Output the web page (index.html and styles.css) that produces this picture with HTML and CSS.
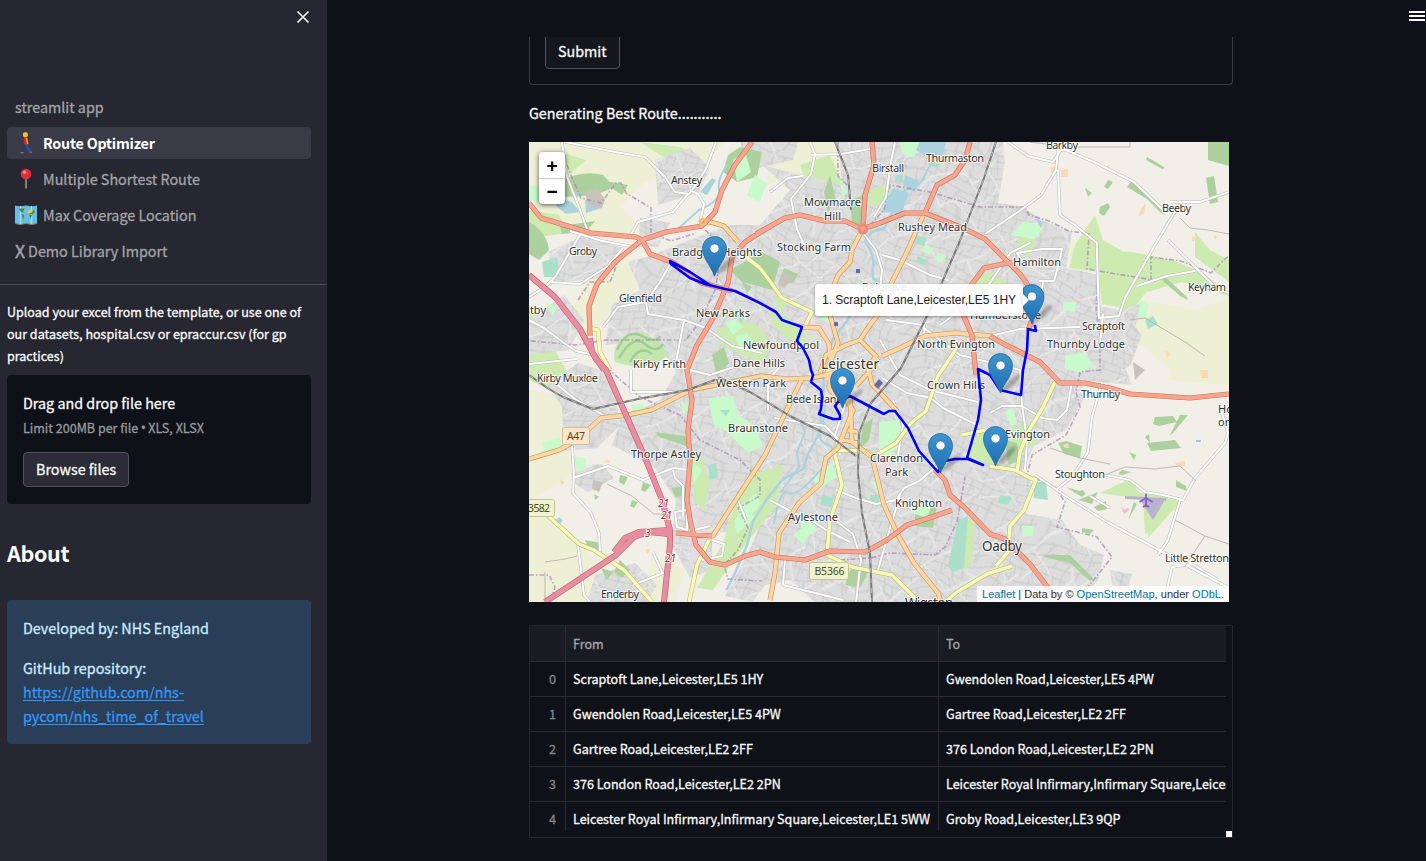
FILE: index.html
```html
<!DOCTYPE html>
<html lang="en">
<head>
<meta charset="utf-8">
<title>Route Optimizer</title>
<link rel="stylesheet" href="styles.css">
</head>
<body>
<div class="app">
<aside class="sidebar">
  <div class="close-row"><svg width="14" height="14" viewBox="0 0 14 14"><path d="M1.5 1.5l11 11M12.500 1.500l-11 11" stroke="#fafafa" stroke-width="1.7"/></svg></div>
  <nav class="nav">
    <a class="nav-item">streamlit app</a>
    <a class="nav-item active"><svg class="emoji" width="22" height="22" viewBox="0 0 22 22"><path d="M9.500 11l-.5 5-2 4" stroke="#29386b" stroke-width="2.600" fill="none"/><path d="M11 11l1.500 5 3 3.500" stroke="#344b8e" stroke-width="2.600" fill="none"/><path d="M8.500 6q2-1.500 4 0l1 6.500h-4.500z" fill="#d3262d"/><path d="M11.500 6l1.200 6" stroke="#f0a019" stroke-width="1.500"/><rect x="8" y=".3" width="4.800" height="5" rx="1.800" fill="#f4c22c"/><path d="M5.500 20.700h3M14.500 20.200h2.500" stroke="#9a8a80"/></svg>Route Optimizer</a>
    <a class="nav-item"><svg class="emoji" width="22" height="22" viewBox="0 0 22 22"><path d="M11 9v11.500" stroke="#9b8e86" stroke-width="1.700"/><circle cx="11" cy="6" r="5.300" fill="#dd2e3b"/><circle cx="9.500" cy="4.300" r="1.700" fill="#ff8d8d"/></svg>Multiple Shortest Route</a>
    <a class="nav-item"><svg class="emoji" width="22" height="22" viewBox="0 0 22 22"><path d="M0 1.500l5 1 6-1 6 1 5-1v18l-5 1-6-1-6 1-5-1z" fill="#61bfe9"/><path d="M5.500 2v18M16.500 2v18" stroke="#a9e0f7" stroke-width="1.500"/><path d="M3.500 4.500l6 0-1.500 4-2-.5zM6.500 10l3 1-1.500 5zM12 7l6-1.500 2 2.500-3 2.500-3-1zM14 10.500l3 .5-1.500 4z" fill="#5f8238"/><path d="M12 6.500l6-1-1 3-4 1z" fill="#e9cc4c"/><path d="M0 19.500l5 1 6-1 6 1 5-1" stroke="#a17d51" fill="none"/></svg>Max Coverage Location</a>
    <a class="nav-item"><span class="nav-x">X</span>Demo Library Import</a>
  </nav>
  <div class="side-body">
    <p class="upload-label">Upload your excel from the template, or use one of<br>our datasets, hospital.csv or epraccur.csv (for gp<br>practices)</p>
    <section class="dropzone">
      <div class="drop-title">Drag and drop file here</div>
      <div class="drop-hint">Limit 200MB per file <span class="bullet">•</span> XLS, XLSX</div>
      <button class="btn browse">Browse files</button>
    </section>
    <h2 class="about">About</h2>
    <div class="info">
      <p>Developed by: NHS England</p>
      <p>GitHub repository:<br><a href="#">https://github.com/nhs-<br>pycom/nhs_time_of_travel</a></p>
    </div>
  </div>
</aside>
<main class="main">
  <header class="topbar"><svg width="16" height="14" viewBox="0 0 16 14"><path d="M0 3h16M0 7h16M0 11h16" stroke="#fafafa" stroke-width="2"/></svg></header>
  <div class="column">
    <div class="form-end"><button class="btn submit">Submit</button></div>
    <p class="status">Generating Best Route...........</p>
    <div class="map">
<svg class="map-svg" width="700" height="460" viewBox="529 142 700 460">
<defs>
  <pattern id="st" width="46" height="42" patternUnits="userSpaceOnUse" patternTransform="rotate(17)">
    <path d="M0 5h46M0 14h27M27 19h19M0 26h46M8 34h38M5 0v14M14 5v21M23 26v16M27 0v26M36 5v14M40 19v23M8 26v16M18 14v5M31 34v8" fill="none" stroke="#c3c3c3" stroke-width=".8"/>
  </pattern>
  <pattern id="st2" width="90" height="84" patternUnits="userSpaceOnUse" patternTransform="rotate(-28)">
    <path d="M0 12h50M12 12v32h60M50 0v44M72 20v64M30 44v40M0 66h30M72 60h18M50 20h40" fill="none" stroke="#ececec" stroke-width="1.300"/>
  </pattern>
  <filter id="wob" x="0" y="0" width="100%" height="100%"><feTurbulence type="fractalNoise" baseFrequency=".022" numOctaves="1" seed="4"/><feDisplacementMap in="SourceGraphic" scale="36" xChannelSelector="R" yChannelSelector="G"/></filter>
  <clipPath id="urban">
    <path d="M838 142H1003L1005 162 998 203 1020 206 1046 222 1072 232 1066 268 1098 275V306L1120 310 1142 335 1130 366 1106 378 1080 372 1084 398 1066 430 1034 446 1022 472 1034 486 1026 514 1062 520 1080 545 1104 555 1098 580 1080 602H815L790 580 765 585 752 602 725 596 752 545 762 520 740 535 722 532 712 540V570L690 578 672 545 676 500 655 468 612 445 622 418 660 400 676 372 655 340 605 345 612 305 640 290 628 262 650 256 690 240 730 225 760 225 790 190 762 165 800 175 842 185Z"/>
    <path d="M655 160l35-12 20 20-12 25-40 12zM548 252l35-16 40 12-20 30-50 5zM529 320l35-25 20 25-15 30-40 5zM548 385l30-22 32 10 8 38-50 5zM562 400l35-10 28 30-28 28-34 3zM574 466l28-2 12 14-26 14-16-10zM595 575l40-12 22 22-10 17h-60zM640 218l30 5-12 24h-20zM1064 348l52-5 16 42-50-5zM1108 316l38-15-12 28zM740 142h58l-5 18-45 10zM1110 570l22 4-6 20-14-10z"/>
  </clipPath>
  <linearGradient id="mk" x1="0" y1="0" x2="0" y2="1"><stop offset="0" stop-color="#3e94d1"/><stop offset="1" stop-color="#1f6eb0"/></linearGradient>
  <filter id="blur"><feGaussianBlur stdDeviation="1.600"/></filter>
  <g id="pin">
    <path d="M0 0L5-9Q14-19 21-20Q17-8 0 0" fill="#000" opacity=".26" filter="url(#blur)"/>
    <path d="M0-.5C-1.500-5-5-10.500-8-15.500-10.500-20-12-24-12-28A12 12 0 0 1 12-28C12-24 10.500-20 8-15.500 5-10.500 1.500-5 0-.5Z" fill="url(#mk)" stroke="#2d6f9f" stroke-width=".9"/>
    <circle cy="-28" r="4.600" fill="#fff" stroke="#2b70a4" stroke-width=".8"/>
  </g>
</defs>
<rect x="529" y="142" width="700" height="460" fill="#f2efe9"/>
<!-- farmland and heath -->
<g fill="#eef0d5">
  <path d="M560 142h165l-20 22-60 18-25 25 35 35-60-8-60-25-6-67zM590 270l35-15 30 20-40 30-30 40-20-20zM529 390l40 8-8 45 15 30-47 28zM1070 240l28 20-10 15-18-8zM1135 298l60 12 34-12v80l-60-10-50-40zM529 505l50 40 60 50-20 7h-90zM770 142h70l-4 45-45-15-25 15zM1180 340h49v45l-60-5zM655 555l30 15-10 32h-40z"/>
</g>
<!-- grassland -->
<g fill="#cdebb0">
  <path d="M529 210l30 5 10 18-40 5zM800 165l30-10 22 50-10 20-30-25zM1075 245l20-30 8 25 18 10-4 24-48-6zM1097 250l35 2 40 8 30 12 30 25-50-15-35 10-25 20-20-28zM1195 232l15 18 19 10v22l-34-25zM1099 275l40-5 15 12-22 28-30-6zM1100 493l30-14 10 14 35 4-22 35-8 2-2-35zM1150 500l34-2-36 40zM529 305l40 70-20 15-20-10zM640 142l40 5 20 10-15 14zM560 152l26 8-22 20-15-18zM590 265l20-5-10 20z"/>
</g>
<!-- built-up districts with minor streets -->
<g clip-path="url(#urban)">
  <rect x="529" y="142" width="700" height="460" fill="#dddddd"/>
  <g filter="url(#wob)"><rect x="500" y="110" width="760" height="520" fill="url(#st)"/><rect x="500" y="110" width="760" height="520" fill="url(#st2)"/></g>
</g>
<!-- green space inside the city -->
<g fill="#cdebb0">
  <path d="M716 330l26-10 16 6 16 18-12 18-22-8-20-10zM735 505l22-32 26-8-6 40-40 50-24 35-16-2 26-45zM955 560l10-38 10-4-3 45-8 8zM690 450l10 4 10 28-6 30-10-12zM1010 430l20-8 8 20-25 15zM1020 235l18-5-8 28-14-8zM968 283l22-12 20 14-22 20-24 4zM977 434l20-2 4 32-34-2zM770 308l16 8 16 14 22 10-10 8-28-10-14-14zM775 295l14 8-10 10zM738 440l6 0-6-10zM870 190l16-6 8 8-14 14-12-2zM726 312l12-4 10 6-10 6z"/>
</g>
<!-- industry -->
<path d="M800 310l30-15 15 20-20 40-18-10zM770 345l20 5 12 30-12 15-20-30zM880 445l20 15-20 20zM690 500l20 20-8 45-15-5z" fill="#ebdbe8" opacity=".5"/>
<!-- woods -->
<g fill="#add19e">
  <path d="M563 180q20-10 40-5l12 12-20 8-30 2zM730 270l32-18 18 10-8 28-30-8zM529 222q18 10 20 28l-10 10-10-6zM850 200l14-5v32l-12-5zM1208 142h21v24l-21-6zM1206 178l8-2 4 26-8 2zM1100 207l8-4 2 4-6 9-5-3zM1085 188l7 5-4 4zM1108 180l5 2-5 7-4-2zM1147 157l12 7 6 4-3 1-16-9zM1131 181l20 16 14 18-4-2-14-14-20-12zM1164 276l22 20 2 4-8-4-18-16zM1155 417l18-1 4 6-18 4-6-2zM1147 443l28-3 6 8-30 3zM1129 452l7 3-2 5zM1150 443l-5-6 4-3zM1176 480l10 6 1 5-11-4zM1122 470l10 2-10 3-4-1zM1094 507l12-6 1 8-9 2zM1082 528l12 2-4 4-8-2zM1180 415l8 0-15 18-3 2zM620 475l8 2-4 8-5-3zM643 482l8 3-6 7-4-2zM632 500l6 2-4 6-4-2zM594 494l5 3-4 3zM620 560l10 10-8 8-8-6zM601 568l12 4-6 8zM585 540l16 3-3 10-10-5zM863 425l10-7-4 22-10 10zM850 570l20-2-10 20-15-3zM915 510l22-4-4 22-18-2zM671 488l14-2 3 8-12 4zM655 432l30 4 8 14-12-6-22-7zM1058 443l8-2 16 5-2 12-16-4zM1044 555l26 0 24 24-4 2-20-18-26-6zM1005 440l12 3 3 18-12 4zM830 175l6 25-8 12-4-20zM1078 500l20-8-6 12zM1066 487l20 6-4 4zM1073 493l10-3 2 4zM1128 520l6-18 3 2zM600 180l28 5-6 10zM712 355l12-8 5 16-12 14zM742 282l10 5-5 6zM728 155l12-8 22 5-5 25-20 5-14-10zM560 226l35-5-8 10-25 3zM784 268l14 6-4 8-16 4z"/>
</g>
<path d="M615 362q-4-16 10-26l18-4 16 10 10 12-10 8-20 6z" fill="#c6e6b0"/>
<g fill="none" stroke="#9dcf94" stroke-width="2.500"><path d="M617 350q10-22 25-14t18 0M619 358q14-24 26-14t18 0M630 362q10-18 22-8"/></g>
<!-- parks, pitches -->
<g fill="#c8facc">
  <path d="M708 398l25-2 4 18 18 12 8 20-15 7-22-22-12-5zM733 160l12-8 6 20-14 10zM755 175l12 8-8 20-12-8zM879 422l20-2 4 16-14 24-10-10zM1010 235l14-14 20 6-10 12zM1063 302l14 0-2 10-12-1zM1065 355l20-2 8 12-10 8-18-4zM1022 526l12 0-1 10-10 1zM848 287l12-5 30 20-8 14-28-14zM820 300l24 8-14 16-12-6zM925 245l8 4-4 6-8-4zM938 252l8 4-4 6-7-3zM1140 300l8 4-2 15-8-2zM1005 412l8-5 4 16-6 4zM530 185l20 5-6 14-16-4zM542 442l18-5 2 12-18 4zM545 302l12 6-5 8zM793 535l10-8 8 5-8 12zM800 522l14-4 2 12-12 6zM812 478l20-15 5 14-18 12zM910 505l12-5 10 4-5 14-16-5zM870 480l12 6-4 8zM742 505l14-12 5 10-15 18-12 8zM900 142l20 0-6 16-12-4zM680 400l12 8-8 6zM735 520l12-14 8 12-18 16zM630 405l12-2 5 8-10 6zM692 462l10 8-8 14zM570 455l16 4-1 12-12-2zM840 180l8 12-6 6zM725 322l10-3 8 8-10 8zM735 336l12-3 8 12-14 6z"/>
</g>
<g fill="#aae0cb">
  <path d="M1034 482l12 0 2 18-14-2zM958 520l10-4-4 52-12 4-4-6zM542 262l15-5 3 20-16 0zM915 235l12 3-3 8-12-4zM918 256l10 5-3 5-9-4zM930 160l12 2-4 6-8-2zM895 175l8 0v6h-8zM708 465l8-2 2 14-8 3zM870 495l8 0 2 8-10 0zM822 495l12 2-2 10-12-2zM1000 495l12 2-4 8-10-2zM736 315l8 2-3 6zM1145 320l8-4 5 8-10 5zM720 410l10 0-4 6z"/>
</g>
<!-- water -->
<g fill="#aad3df"><path d="M560 198l12 4 8 10-14 2-10-8zM585 200l15 0 2 8-16 5zM572 190l8 4-6 7zM920 142l26 0-4 18-14-2-12-8zM905 175l14 6-4 12-12-8zM893 188l16 5-8 22-18-4 5-14zM1035 218l8 4-2 6zM898 160l10 6-5 6zM700 192l12-14 4 2-9 15zM559 517l4 3-4 5-4-4z"/></g>
<g fill="#c7c2ba"><path d="M585 192l12-4 8 12-3 8-14-2zM782 272l12 4-10 12-6-4zM593 480l10 2-4 10-7-3zM1133 362l12 8-10 10z"/></g>
<g fill="none" stroke="#aad3df" stroke-linecap="round">
  <path stroke-width="2.500" d="M905 190q-6 14-12 22t-8 16l-14 4-6 10q10 12 8 25t4 14q-6 16-18 18l-12 22-12 15-6 10-8 20 3 16-3 30-1 20-12 22-5 15-20 10-16 20-14 22-6 24-12 28-8 16"/>
  <path stroke-width="2" d="M945 150q-15 12-20 25t-20 15M727 165q-10 14-8 25t-20 20l-20 18M822 390q6 18 0 35t6 20-10 28-30 20-14 30M801 422l4 10-8 20 2 15-18 25"/>
</g>
<!-- orchards and villages -->
<g fill="#fad9b4"><path d="M1050 168l8-3 2 8-9 0zM1061 170l7-1 0 8-7 0zM1142 207l4-4-2 10-6 4zM1192 238l4-3 1 5-5 1zM1063 445l5-2 1 5-4 0zM1175 463l10-2 0 5-9 0zM1086 226l4 2-4 3zM1214 236l4 0-3 4zM1106 167l3-2 1 3zM560 480l5 2-4 3zM645 550l6-2-3 6zM1165 350l6 3-4 5zM1200 370l8 0 0 8-7 0zM603 462l5-3 2 4z"/></g>
<!-- administrative boundaries -->
<g fill="none" stroke="#a98bb4" stroke-width="1.600" stroke-dasharray="5 2 1.500 2" opacity=".75">
  <path d="M563 155l10 25 8 18 20 5 15-20 5 0 5 10 25 15 0 25 20 8 25-8M578 300l12-18 20 0 12-30M705 230q20 15 10 60l-14 30-15 20-80 0-30 5-55-5M838 142v34l10 10M870 225l14-15 6-25 22 4 18 3 50 15 15 0h30l4 8 20 6 20 10 20 3-2 35 60 10 4 2 0-24 30 4 30 12 15-15 18-12M1098 275l-2 35 4 25v35l-20 2-4 20 4 15-14 28-34 20-5 20 28 12 10 15-8 25 40 10 15 20-24 30M600 360l15 15 25 22 40 18 20 25 40 20 20 20 0 16-22 12 10 20-10 22-14 15 4 14 34 2M840 560l30-2 20-5 45 2 10-8 12-25 8-45M529 575l20 0 6 12-5 15"/>
</g>
<!-- unclassified roads: casing then fill -->
<g class="road" stroke="#bcbcb8" stroke-width="3.200"><path id="wroads" d="M565 142l50 10 30 5 20 20 10 15 14 2 5-7 12-18 10-27M690 190l8 4 6 10-4 18M688 194l-15 18-35 10-8 14M562 142l5 35 12 30 8 22M570 231l32 10 32 6M580 235l-25 42-10 10-16 10M550 282l30 2 28-18 15-18M670 264l-10 18-14 20-28 5-15 20M646 302l2 12 36 6 22 8 26 18 30 7M684 320l-8 42M529 320l15 8 20 15 12 8 22 5 8 12M529 364l48-5M770 192l18-14 15-2M810 142l5 12-4 20-20 25 6 30 8 18M811 155l30-1 29-5M895 142l-4 20-5 35-12 20M861 230l15 20 6 20-2 20M882 255l18 5 30 15 18 5M1008 142l20 14 25 6 8-12 5 0 28 12 40 20 28 27M1058 150l-2 20-15 25-20 15-18 12-18 12M1058 170l2 45 15 10 22 18 0 10 2 65 20-2 6-18 10-18 20-35 18-30 10-14M1170 202l30 0 29-10M1168 240l28 28 20 20 13 5M1137 286l30-10 28-5M990 336l30-7 60-2M1025 265l-8-12 25-4 20 0-2 10-6 22-15 0M1043 282l-3 20M1100 344l3-30M1102 382l-10 35-4 35-16 25-15 12M990 413l12-7 20 0 20 12 15 2 10-10 5-28M1020 370l2 35 5 35-2 30M1035 475l32 22 40 25 52 28 40 22 30 16M1105 475l25 5 15 12 18 3 20 5 12-22 30-35 3-10-6-20M1180 500l-12 40-10 15M1164 602l8-35 20-3 25 15M572 445l2 30-1 18 18 20 8 20 1 20M573 478l35-12 35 14 10-4 20-8 16 2M673 470l2 8 8 8v30M578 545l6 50 6 7M633 585l38-15M653 552l10 22M545 375l30 24 28 16M694 530l16-4M712 540l12 4-2 12-20 4M675 512l12-2v20l-10-3zM631 370v22l50 0M690 385l0-15 20 5 30-10M770 500l22 12 22 10 12 8 24 12M836 490l20 8 20 6 20-4 8-12 15-7 18-15M882 378l25 15 24 5 12 10 20 10 16 8M900 495l-12 40-10 35M880 340l20 35 30 15 48 12M850 390l-15 45 5 20M920 325l40 30 60 15M785 560l-2 25 60 15M940 325l30-22 20-20 20-30 20-10M886 320l38 5 1 20M775 418l50 8 15 15M1110 508l-20-12M768 410l0-30 18-20M746 520l-10-25M835 520l18 14 8 25-5 43M893 400l10 25-5 30"/></g>
<use class="road" href="#wroads" stroke="#fff" stroke-width="2"/>
<path d="M607 484l25 12 22 18 10 0M545 562l20-3 12-3M545 602v-30M1105 475l20-8 30 2 25-3 16 15M1175 520l30 16 24 8M1130 320l15-2 20 12 20 12 20 14M1180 218l10 10 18 2 21 4M1030 142l40 5 60 0 0-5M1050 448l30 10 30 6M1205 536l-20 30" fill="none" stroke="#bdb9b3"/>
<!-- secondary roads -->
<g class="road" stroke="#b8bb6b" stroke-width="4.600"><path id="yroads" d="M544 512l35 32 15 6 30 20 28 32M709 540l-12 25-8 37M588 328l10 2 2 22 10 18M760 268l12 16 10 14 30 14-8 16M746 257l14 11M835 450l30 1 10 5M834 450l8 35-12 35-3 35 25 12 40 8 25 25 18 10M945 602l12-10 30-18 25-8M876 455l20-12 15-20 15-12 12-35 20-30M990 466l25 4 15 8 6 2-12 30-14 16-2 26-12 14M1055 382l-12 25-15 25-8 20-3 20M962 435l24-5"/></g>
<use class="road" href="#yroads" stroke="#f6f9ba" stroke-width="3.500"/>
<!-- primary roads -->
<g class="road" stroke="#c59651" stroke-width="5"><path id="oroads" d="M529 459l30-9 18-10 24-22 26-3 24-5 40-20 30-6 40-8 25 3 26-1 18-4M862 230l-10 20-2 12-12 13-8 20 0 20 8 28-10 25-2 12M923 216l-18 40-15 30-2 15-18 24-10 15-14 5-20 10-6 18M802 327l17 1 10 16 2 24M882 356l18-8 25-12 30-3 36 3M712 537l18-28 35-54 28-58 10-20M843 395l10 15-15 38-12 10-5 25-22 20-20 30-4 40-5 27M850 396l2 46 20 15 12 48 14 30 16 28 24 30 3 9M831 370l-2 18 12 15M860 340l16 16-8 12 4 16 25 27M856 386l18-20 4-8M702 222l8 0 14 4 14 16M843 440l15 3M848 430l9 2"/></g>
<use class="road" href="#oroads" stroke="#fcd6a4" stroke-width="3.800"/>
<!-- trunk roads -->
<g class="road" stroke="#cf6f56" stroke-width="5.200"><path id="troads" d="M529 203l12 15 50 15 45 4 6 3 24-8 36-6 13-14 7-22 13-25 17-23M642 240l8 14 22 8 30 21 30 8M642 240l-27 22-18 22-8 22 1 30M769 227l-24 15-13 15-4 26-16 37-15 25-10 25 5 30-4 30 2 30-3 40 3 20 6 25 14 17 15 3 20-9 15-4 15 5 30 3 25-9 35 1 22-12 20-15 25-8 20-7M935 470l10 10 5 15 15 13 25 26 15 5 25 25 25 33M676 533l36 3M756 234l29-16 15-3 25 6h20l17 8 18-6 25-10h20l40 16 20 10 15 15 20 20 14 20M970 142l-5 18-10 15-18 10-12 28M872 142l2 23-9 30-2 33M1012 262l-28 6-12 16-13 21 13 30 4 40M990 336l14 8 36 18 20 21h25l25 5 20 6 60 4 39-4M1032 320l-4 10"/></g>
<use class="road" href="#troads" stroke="#f6a58f" stroke-width="4"/>
<circle cx="863" cy="229" r="4" fill="none" stroke="#e58d79" stroke-width="3"/>
<circle cx="703" cy="222" r="3" fill="none" stroke="#efbd77" stroke-width="2"/>
<!-- motorways -->
<g class="road" stroke="#c9566f" stroke-width="6"><path id="mway" d="M529 275l26 22 25 32 16 30 10 11 20 45 20 45 16 40 8 30v15l-6 57M669 534l-20-2-15 5-18 18-71 47M669 530l-30 2-14 6-11 14M590 338l2 14 12 18"/></g>
<use class="road" href="#mway" stroke="#e68fa0" stroke-width="4.800"/>
<!-- railways -->
<g class="road" stroke="#777" stroke-width="2"><path id="rail" d="M996 142l-12 36-25 65-28 65-30 60-30 35-12 30-1 40 4 40 8 40 2 49M529 375l20 14 14 8 30 12 45-10 50-9 32-12 30 14 40 24 40 20 26 20M835 142l13 33 3 35"/></g>
<use class="road" href="#rail" stroke="#c4c4c4" stroke-width=".8" stroke-dasharray="5 5"/>
<!-- airfield -->
<path d="M1125 496l41 2 0 3-41-2zM1140 500h25l-12 20z" fill="#bab3cf"/>
<path d="M1146 494v13M1139.500 502l6.500-4 6.500 4M1143 507l3-2 3 2" stroke="#8461c4" stroke-width="1.800" fill="none"/>
<path d="M1121 507l4 3 3-3 1 3-5 4z" fill="#ffb6c8"/><path d="M1196 441h5" stroke="#4a9fe0"/>
<g fill="#6868a5"><path d="M856 269h4v4h-4zM834 322h4v4h-4zM874 385l5-6 4 4-5 6z"/></g>
<!-- place names -->
<g class="lbl">
<text x="671" y="184" textLength="31">Anstey</text><text x="1046" y="149" textLength="32">Barkby</text><text x="872" y="172" textLength="32">Birstall</text><text x="926" y="162" textLength="58">Thurmaston</text><text x="804" y="206" textLength="57">Mowmacre</text><text x="824" y="220" textLength="17">Hill</text><text x="898" y="231" textLength="69">Rushey Mead</text><text x="1162" y="212" textLength="29">Beeby</text><text x="777" y="251" textLength="74">Stocking Farm</text><text x="569" y="255" textLength="28">Groby</text><text x="672" y="256" textLength="90">Bradgate Heights</text><text x="1013" y="266" textLength="48">Hamilton</text><text x="619" y="302" textLength="43">Glenfield</text><text x="696" y="317" textLength="54">New Parks</text><text x="862" y="291" textLength="45">Belgrave</text><text x="970" y="319" textLength="71">Humberstone</text><text x="1188" y="291" textLength="38">Keyham</text><text x="1082" y="330" textLength="43">Scraptoft</text><text x="1047" y="348" textLength="78">Thurnby Lodge</text><text x="917" y="348" textLength="78">North Evington</text><text x="743" y="349" textLength="76">Newfoundpool</text><text x="733" y="367" textLength="52">Dane Hills</text><text x="633" y="368" textLength="53">Kirby Frith</text><text x="517" y="314" textLength="29">Ratby</text><text x="537" y="382" textLength="61">Kirby Muxloe</text><text x="716" y="387" textLength="70">Western Park</text><text x="927" y="389" textLength="58">Crown Hills</text><text x="786" y="403" textLength="57">Bede Island</text><text x="728" y="432" textLength="60">Braunstone</text><text x="1081" y="398" textLength="39">Thurnby</text><text x="1005" y="438" textLength="45">Evington</text><text x="631" y="458" textLength="70">Thorpe Astley</text><text x="870" y="462" textLength="53">Clarendon</text><text x="885" y="476" textLength="23">Park</text><text x="1055" y="478" textLength="50">Stoughton</text><text x="895" y="507" textLength="47">Knighton</text><text x="788" y="521" textLength="50">Aylestone</text><text x="1165" y="562" textLength="64">Little Stretton</text><text x="601" y="598" textLength="38">Enderby</text><text x="1218" y="413">Houghton</text><text x="1218" y="426">on</text>
<g class="big"><text x="821" y="369" textLength="58">Leicester</text><text x="982" y="551" textLength="40">Oadby</text><text x="905" y="608" textLength="48">Wigston</text></g>
</g>
<g class="shield"><rect x="562.500" y="427.500" width="27" height="17" rx="2" fill="#f8e5cd" stroke="#d9bd95"/><text x="567" y="439.500" textLength="18" fill="#69420f">A47</text><rect x="515.500" y="499.500" width="39" height="17" rx="2" fill="#f1f2cf" stroke="#c4c692"/><text x="522" y="512" textLength="28" fill="#4a4e1c">B3582</text><rect x="809.500" y="562.500" width="39" height="17" rx="2" fill="#f1f2cf" stroke="#c4c692"/><text x="814.500" y="575" textLength="30" fill="#4a4e1c">B5366</text></g>
<g class="junction"><text x="658" y="507">21</text><text x="661" y="518.500">21</text><text x="665" y="562">21</text><text x="645" y="537">3</text></g>
<!-- computed route -->
<path class="route" d="M710 285L690 272 670 261 671 264 690 278 705 284 725 289 735 291 760 303 776 312 782 320 802 327 797 341 803 348 809 360 811 370 813 375 811 382 821 390 822 397 821 409 819 414 833 419 840 419 840 415 835 406 838 402 850 396 884 414 889 411 895 411 908 428 919 451 938 472 945 461 955 459 968 459 983 465 967 458 978 420 981 400 978 369 990 375 1000 390 1021 395 1023 370 1027 350 1028 329 1036 331 1035 326"/>
<use href="#pin" x="714.500" y="276.500"/><use href="#pin" x="1032" y="324.500"/><use href="#pin" x="1000.500" y="393.500"/><use href="#pin" x="842.500" y="408.500"/><use href="#pin" x="995.500" y="466.500"/><use href="#pin" x="940.500" y="473.500"/>
</svg>
      <div class="zoom-ctl"><span>+</span><span>−</span></div>
      <div class="tip">1. Scraptoft Lane,Leicester,LE5 1HY</div>
      <div class="attrib"><a>Leaflet</a> | Data by © <a>OpenStreetMap</a>, under <a>ODbL</a>.</div>
    </div>
    <div class="grid-frame">
      <div class="grid">
        <div class="cell head"></div><div class="cell head">From</div><div class="cell head last">To</div>
        <div class="cell idx">0</div><div class="cell">Scraptoft Lane,Leicester,LE5 1HY</div><div class="cell last">Gwendolen Road,Leicester,LE5 4PW</div>
        <div class="cell idx">1</div><div class="cell">Gwendolen Road,Leicester,LE5 4PW</div><div class="cell last">Gartree Road,Leicester,LE2 2FF</div>
        <div class="cell idx">2</div><div class="cell">Gartree Road,Leicester,LE2 2FF</div><div class="cell last">376 London Road,Leicester,LE2 2PN</div>
        <div class="cell idx">3</div><div class="cell">376 London Road,Leicester,LE2 2PN</div><div class="cell last">Leicester Royal Infirmary,Infirmary Square,Leicester,LE1 5WW</div>
        <div class="cell idx">4</div><div class="cell">Leicester Royal Infirmary,Infirmary Square,Leicester,LE1 5WW</div><div class="cell last">Groby Road,Leicester,LE3 9QP</div>
      </div>
      <span class="resize"></span>
    </div>
  </div>
</main>
</div>
</body>
</html>
```
FILE: styles.css
```css
* { box-sizing: border-box; }
body { margin: 0; background: #0e1117; color: #fafafa; font-family: "Noto Sans CJK SC", sans-serif; font-size: 14.33px; line-height: 24px; }
p, h2 { margin: 0; }
.app { display: flex; height: 861px; overflow: hidden; }
.nav-item, .upload-label, .dropzone, .info, .btn, .status, .grid { -webkit-text-stroke: .3px currentColor; }
.sidebar { width: 327px; flex: none; background: #262730; }
.close-row { height: 91px; padding: 10px 17px 0 0; display: flex; justify-content: flex-end; }
.nav { padding: 0 16px 16px 7px; height: 194px; border-bottom: 1px solid #4a4b55; display: flex; flex-direction: column; gap: 4px; }
.nav-item { height: 32px; flex: none; padding: 0 8px; border-radius: 4px; display: flex; align-items: center; color: #a3a3a8; white-space: pre; }
.nav-item.active { background: #3b3b47; color: #fff; font-weight: 700; letter-spacing: -.23px; -webkit-text-stroke: 0; }
.emoji { margin-right: 6px; flex: none; }
.nav-x { margin-right: 3px; font-size: 17.5px; -webkit-text-stroke: .5px currentColor; }
.side-body { padding: 16px 16px 0 7px; }
.upload-label { font-size: 12.54px; line-height: 22px; white-space: nowrap; height: 74px; }
.dropzone { background: #0e1117; border-radius: 4px; height: 129px; padding: 16px 16px 0; }
.drop-hint { font-size: 12.54px; color: #97989c; line-height: 22px; margin-top: 2px; }
.bullet { font-family: "Open Sans", sans-serif; font-size: 14px; line-height: 1; margin: 0 -.5px; }
.btn { font: inherit; color: inherit; background: #2b2c36; border: 1px solid #51525b; border-radius: 4px; padding: 0 12px 2px; height: 35px; display: block; white-space: nowrap; }
.browse { margin-top: 13px; }
.about { font-size: 21.5px; line-height: 30px; font-weight: 700; letter-spacing: -.35px; margin: 34px 0 32px; }
.info { background: #2b3e57; color: #c7ebff; border-radius: 4px; height: 144px; padding: 16px; display: flex; flex-direction: column; gap: 16px; }
.info a { color: #3397f5; text-underline-offset: 2px; }
.main { flex: 1; min-width: 0; }
.topbar { height: 37px; display: flex; justify-content: flex-end; padding: 9px 1px 0 0; }
.column { width: 704px; margin-left: 202px; }
.form-end { height: 48px; border: 1px solid #393c43; border-top: 0; border-radius: 0 0 4px 4px; padding-left: 15px; overflow: hidden; }
.submit { background: #14171e; margin-top: -4px; height: 36px; padding-bottom: 0; }
.status { margin-top: 16px; margin-bottom: 17px; }
.map { position: relative; width: 700px; height: 460px; overflow: hidden; font-family: "Liberation Sans", sans-serif; color: #333; }
.map-svg { display: block; }
.road { fill: none; stroke-linejoin: round; }
.lbl text { font: 11px "Noto Sans", sans-serif; fill: #303030; stroke: #fff; stroke-opacity: .75; stroke-width: 2.2px; paint-order: stroke; stroke-linejoin: round; }
.lbl .big text { font-size: 13.5px; }
.shield text { font: 10.5px "Noto Sans", sans-serif; }
.junction text { font: italic 10px "Noto Sans", sans-serif; fill: #a5203c; stroke: #fff; stroke-width: 1.5px; paint-order: stroke; }
.route { fill: none; stroke: #0000f5; stroke-width: 2.6; stroke-linejoin: round; stroke-linecap: round; }
.zoom-ctl { position: absolute; left: 10px; top: 10px; width: 26px; height: 52px; background: #fff; border-radius: 4px; box-shadow: 0 1px 5px rgba(0,0,0,.65); color: #000; display: flex; flex-direction: column; }
.zoom-ctl span { height: 26px; text-align: center; font: bold 19px/28px "Liberation Sans", sans-serif; }
.zoom-ctl span + span { border-top: 1px solid #ccc; line-height: 26px; }
.tip { position: absolute; left: 286px; top: 142px; width: 208px; height: 32px; padding: 0 7px; line-height: 32px; font-size: 12px; white-space: nowrap; color: #222; background: rgba(255,255,255,.9); border-radius: 3px; box-shadow: 0 1px 3px rgba(0,0,0,.4); }
.tip::after { content: ""; position: absolute; left: 100%; top: 10px; border: 6px solid transparent; border-left-color: #fff; border-right: 0; }
.attrib { position: absolute; right: 0; bottom: 0; height: 16px; padding: 0 5px; line-height: 16px; font-size: 11.05px; white-space: nowrap; background: rgba(255,255,255,.8); }
.attrib a { color: #0078a8; }
.grid-frame { position: relative; margin-top: 23px; width: 704px; height: 213px; border: 1px solid #25282d; }
.grid { width: 696px; height: 205px; overflow: hidden; display: grid; grid-template-columns: 36px 373px 287px; grid-template-rows: 36px repeat(5, 35px); font-size: 12.55px; }
.cell { border-right: 1px solid #292b31; border-bottom: 1px solid #292b31; padding: 0 7px; line-height: 34px; white-space: nowrap; overflow: hidden; min-width: 0; }
.cell.last { border-right: 0; padding-right: 0; }
.cell.head { background: #1a1c24; color: #a3a4a8; line-height: 36px; }
.cell.idx { color: #84868a; text-align: right; padding-right: 9px; }
.resize { position: absolute; right: 0; bottom: 0; width: 6px; height: 6px; background: #fff; }
```
